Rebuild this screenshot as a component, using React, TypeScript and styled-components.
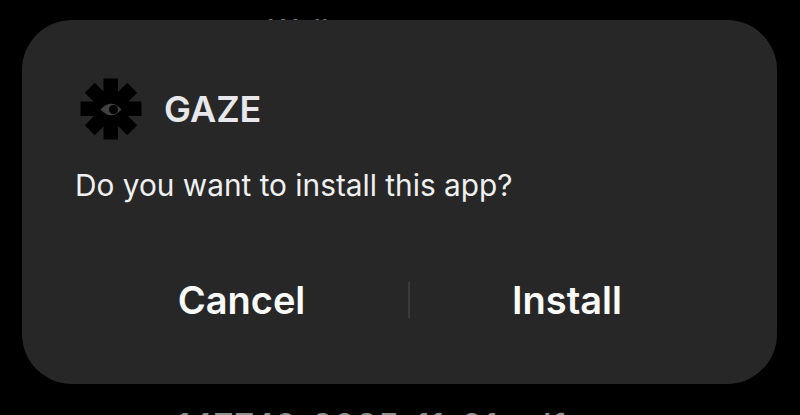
import { FC } from "react";
import styled, { createGlobalStyle } from "styled-components";

const GlobalStyle = createGlobalStyle`
  html, body {
    margin: 0;
    padding: 0;
    background: #000;
    overflow: hidden;
  }
`;

const Screen = styled.div`
  position: relative;
  width: 800px;
  height: 415px;
  box-sizing: border-box;
  padding: 20px 23px 31px 22px;
  background: #000;
  overflow: hidden;
  font-family: Inter, Roboto, sans-serif;
`;

const BehindTop = styled.div`
  position: absolute;
  top: 12px;
  left: 268px;
  color: #6e6e6e;
  font-size: 30px;
  font-weight: 500;
  line-height: 36px;
  white-space: nowrap;
`;

const BehindBottom = styled.div`
  position: absolute;
  top: 405px;
  left: 176px;
  color: #8f8f8f;
  font-size: 35px;
  font-weight: 500;
  line-height: 42px;
  white-space: nowrap;
`;

const Dialog = styled.div`
  position: relative;
  height: 100%;
  display: flex;
  flex-direction: column;
  box-sizing: border-box;
  padding: 58px 53px 0 53px;
  background: #272728;
  border-radius: 50px;
`;

const Header = styled.div`
  display: flex;
  align-items: center;
  gap: 22px;
  height: 62px;
  padding-left: 5px;
`;

const AppName = styled.div`
  color: #e8e8ec;
  font-size: 36px;
  font-weight: 600;
  line-height: 62px;
`;

const Question = styled.div`
  margin-top: 26px;
  color: #f0f0f0;
  font-size: 29.8px;
  line-height: 38px;
`;

const Actions = styled.div`
  display: grid;
  grid-template-columns: 333px 2px 314px;
  align-items: center;
  margin-top: 66px;
`;

const Action = styled.button`
  height: 60px;
  padding: 0;
  border: 0;
  background: none;
  color: #fbfbfb;
  font-family: inherit;
  font-size: 38px;
  font-weight: 600;
`;

const Divider = styled.div`
  width: 2px;
  height: 36px;
  background: #3a3a3b;
`;

const Logo: FC = () => (
  <svg width="62" height="62" viewBox="0 0 62 62" aria-label="GAZE logo">
    <g fill="#000">
      <rect x="23.5" y="0.5" width="14.5" height="61" />
      <rect x="24" y="1" width="14" height="60" transform="rotate(45 31 31)" />
      <rect x="23.5" y="0.5" width="14.5" height="61" transform="rotate(90 31 31)" />
      <rect x="24" y="1" width="14" height="60" transform="rotate(135 31 31)" />
    </g>
    <path d="M20.5 31.5 Q31 20 41.5 31.5 Q31 43 20.5 31.5 Z" fill="#414143" />
    <circle cx="33.5" cy="31.5" r="4.5" fill="#000" />
  </svg>
);

const App: FC = () => (
  <Screen>
    <GlobalStyle />
    <BehindTop>Wallpapers</BehindTop>
    <BehindBottom>147749_2025-11-01.pdf</BehindBottom>
    <Dialog>
      <Header>
        <Logo />
        <AppName>GAZE</AppName>
      </Header>
      <Question>Do you want to install this app?</Question>
      <Actions>
        <Action>Cancel</Action>
        <Divider />
        <Action>Install</Action>
      </Actions>
    </Dialog>
  </Screen>
);

export default App;
